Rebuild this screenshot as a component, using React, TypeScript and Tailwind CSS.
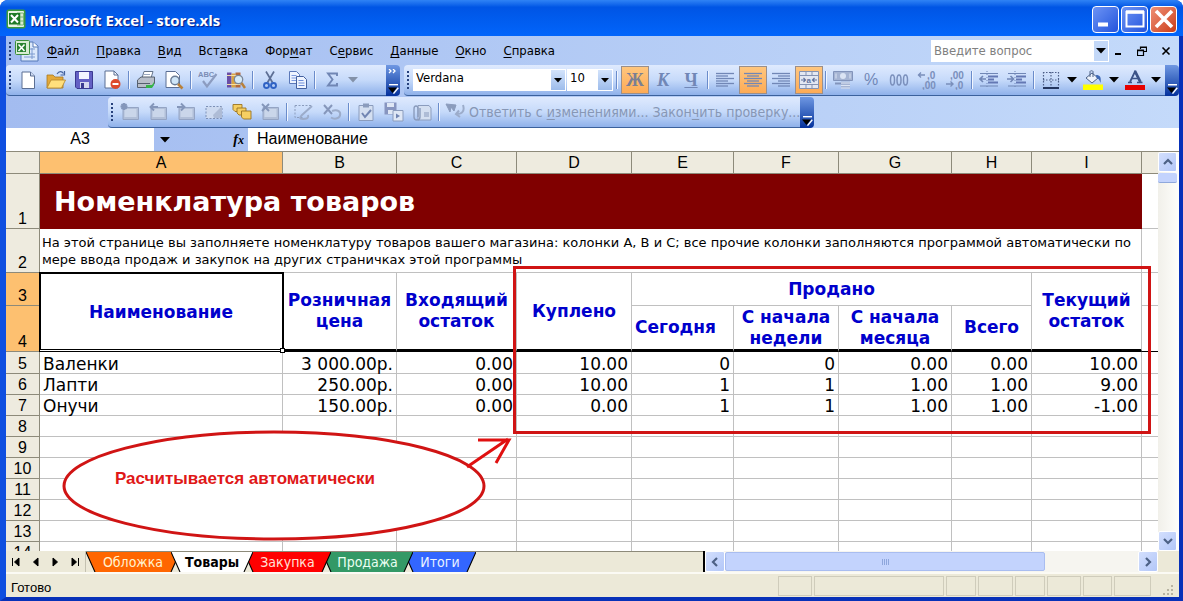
import type { ReactNode } from "react";

const ui = "font-['DejaVu_Sans_Condensed','DejaVu_Sans',sans-serif]";
const arial = "font-['Liberation_Sans',Arial,sans-serif]";
const verdana = "font-['DejaVu_Sans',Verdana,sans-serif]";

/* ---------- small building blocks ---------- */

function Icon({ children, className = "h-5 w-5" }: { children: ReactNode; className?: string }) {
  return (
    <svg viewBox="0 0 20 20" className={className} aria-hidden="true">
      {children}
    </svg>
  );
}

function Tool({ label, active, children }: { label: string; active?: boolean; children: ReactNode }) {
  return (
    <button
      type="button"
      aria-label={label}
      title={label}
      className={
        active
          ? "flex h-7 w-7 shrink-0 items-center justify-center border border-[#9a8f8c] bg-[#fdb462] bg-linear-to-b from-[#ffc67e] to-[#fdab55]"
          : "flex h-7 w-7 shrink-0 items-center justify-center"
      }
    >
      {children}
    </button>
  );
}

function Drop({ label, dim }: { label: string; dim?: boolean }) {
  return (
    <button type="button" aria-label={label} className="flex h-7 w-3.5 shrink-0 items-center justify-center">
      <svg viewBox="0 0 10 6" className="h-1.5 w-2.5" aria-hidden="true">
        <path d="M0 0h10L5 5.5z" fill={dim ? "#8391a8" : "#000"} />
      </svg>
    </button>
  );
}

function Sep() {
  return (
    <span className="flex w-1.5 shrink-0 justify-center">
      <span className="h-[18px] w-px bg-[#6a8ccb]" />
      <span className="h-[18px] w-px bg-[#f1f6ff]" />
    </span>
  );
}

function Grip() {
  return <span className="ml-[3px] mr-[3px] h-[18px] shrink-0 border-l-2 border-dotted border-[#27417c]" />;
}

function BarEnd({ more }: { more?: boolean }) {
  return (
    <button
      type="button"
      aria-label="Параметры панелей инструментов"
      className="flex h-full w-3.5 shrink-0 flex-col items-center justify-between self-stretch rounded-r-sm bg-linear-to-b from-[#6f97e2] to-[#04309c] pt-1 pb-0.5"
    >
      <svg viewBox="0 0 10 5" className="h-[5px] w-2.5" aria-hidden="true">
        {more && <path d="M1 0l2 2-2 2M5 0l2 2-2 2" fill="none" stroke="#fff" strokeWidth="1.3" />}
      </svg>
      <svg viewBox="0 0 12 10" className="h-2.5 w-3" aria-hidden="true">
        <path d="M2 .7h9" stroke="#fff" strokeWidth="1.4" />
        <path d="M1 3.5h9L5.500 9z" fill="#000" />
        <path d="M11.3 3.8L6.5 9.6" stroke="#fff" strokeWidth="1.4" />
      </svg>
    </button>
  );
}

const barLook = "flex items-center rounded-l-sm border-b border-[#3b619c] bg-linear-to-b from-[#dfeafe] via-[#c6dafa] to-[#8fb1ea]";

function ExcelMark({ className }: { className: string }) {
  return (
    <Icon className={className}>
      <rect x="0.500" y="0.500" width="19" height="19" rx="2" fill="#3c9a3e" />
      <rect x="2" y="2" width="16" height="16" rx="1" fill="#e9f3e4" />
      <path d="M11 4h6.500v12H11M14 4v12M11 8h6.500M11 12h6.500" fill="#d8ead2" stroke="#5ea65c" strokeWidth=".8" />
      <rect x="3" y="4" width="11" height="11.500" fill="#1f7a27" />
      <path d="M5 6l7 7.500M12 6l-7 7.500" stroke="#fff" strokeWidth="2" />
    </Icon>
  );
}

/* ---------- menu and toolbars ---------- */

const menus: [string, string, string][] = [
  ["", "Ф", "айл"],
  ["", "П", "равка"],
  ["", "В", "ид"],
  ["Вст", "а", "вка"],
  ["Фор", "м", "ат"],
  ["С", "е", "рвис"],
  ["", "Д", "анные"],
  ["", "О", "кно"],
  ["", "С", "правка"],
];

function TitleBar() {
  const box = "flex h-[27px] w-[27px] items-center justify-center rounded-[4px] border border-white";
  return (
    <header className="flex h-9 shrink-0 items-center bg-linear-to-b from-[#2f83f5] via-[#0055e5] via-20% to-[#0265fb] pr-1.5 pl-1.5">
      <ExcelMark className="mt-0.5 h-5 w-5" />
      <h1 className="ml-1 flex-1 truncate pt-1 font-['Open_Sans','Noto_Sans',sans-serif] text-[15px] font-bold text-white [text-shadow:1px_1px_1px_#0a1883]">
        Microsoft Excel - store.xls
      </h1>
      <div className="flex gap-0.5 pt-0.5">
        <button type="button" aria-label="Свернуть" className={`${box} bg-linear-to-br from-[#6d93f4] to-[#2352dc]`}>
          <Icon><path d="M2 15.5h10" stroke="#fff" strokeWidth="4" /></Icon>
        </button>
        <button type="button" aria-label="Развернуть" className={`${box} bg-linear-to-br from-[#6d93f4] to-[#2352dc]`}>
          <Icon><path d="M1.500 2v15.500h17V2M1 3.200h18" fill="none" stroke="#fff" strokeWidth="2" /><path d="M1 3h18" stroke="#fff" strokeWidth="3.500" /></Icon>
        </button>
        <button type="button" aria-label="Закрыть" className={`${box} bg-linear-to-br from-[#ee8f74] to-[#cb3a12]`}>
          <Icon><path d="M2 2l16 16M18 2L2 18" stroke="#fff" strokeWidth="3.600" /></Icon>
        </button>
      </div>
    </header>
  );
}

function MenuBar() {
  return (
    <div className="flex h-[29px] shrink-0 items-center pr-1">
      <Grip />
      <svg viewBox="0 0 24 22" className="ml-px h-[22px] w-6 shrink-0" aria-hidden="true">
        <path d="M6 2h12l5 4v15H6z" fill="#dce9fb" stroke="#5478b8" />
        <path d="M18 2v5h5" fill="#fff" stroke="#5478b8" />
        <path d="M9 17h11M9 14h11M14 9h6M17 8v11" stroke="#7c9bd0" />
        <rect x=".5" y=".5" width="14" height="14" rx="1" fill="#d8ecd2" stroke="#3c8f3c" />
        <rect x="2" y="3" width="9" height="9" fill="#2a8330" />
        <path d="M3.500 4.500l6 6.500M9.500 4.500l-6 6.500" stroke="#fff" strokeWidth="1.600" />
      </svg>
      <nav className={`ml-2 flex flex-1 gap-[17px] text-[13px] text-black ${ui}`}>
        {menus.map(([a, b, c]) => (
          <button type="button" key={a + b + c}>
            {a}
            <span className="underline underline-offset-2">{b}</span>
            {c}
          </button>
        ))}
      </nav>
      <div className="flex h-[22px] w-[178px] items-center bg-white pr-px">
        <input
          aria-label="Введите вопрос"
          placeholder="Введите вопрос"
          className={`min-w-0 flex-1 bg-transparent pl-[3px] text-[13px] outline-none placeholder:text-[#808080] ${ui}`}
        />
        <span className="flex h-5 items-center bg-[#c3d8f8]"><Drop label="Вопросы" /></span>
      </div>
      <div className="flex gap-1.5">
        <button type="button" aria-label="Свернуть книгу" className="flex w-[18px] justify-center">
          <svg viewBox="0 0 10 10" className="h-2.5 w-2.5"><path d="M2 8h6" stroke="#000" strokeWidth="2" /></svg>
        </button>
        <button type="button" aria-label="Восстановить книгу" className="flex w-[18px] justify-center">
          <svg viewBox="0 0 10 10" className="h-2.5 w-2.5"><path d="M3.500 3V1h6v4.500H7M3.500 1.500h6M.5 4h6v5.500h-6zM.5 4.600h6" fill="none" stroke="#000" strokeWidth="1.200" /></svg>
        </button>
        <button type="button" aria-label="Закрыть книгу" className="flex w-[18px] justify-center">
          <svg viewBox="0 0 10 10" className="h-2.5 w-2.5"><path d="M1.500 1.500l7 7M8.500 1.500l-7 7" stroke="#000" strokeWidth="1.600" /></svg>
        </button>
      </div>
    </div>
  );
}

function PageShape() {
  return (
    <>
      <path d="M4 2h8.500l4 4v12.500H4z" fill="#fff" stroke="#5b6f94" />
      <path d="M12.500 2v4h4" fill="#cfdcf2" stroke="#5b6f94" />
    </>
  );
}

function Combo({ label, value, className }: { label: string; value: string; className: string }) {
  return (
    <div className={`relative flex h-[22px] shrink-0 bg-white ${className}`}>
      <select aria-label={label} defaultValue={value} className={`block w-full appearance-none bg-transparent pb-1 pl-[3px] text-[13px] leading-4 outline-none ${ui}`}>
        <option>{value}</option>
      </select>
      <span className="pointer-events-none absolute top-px right-px flex h-5 w-3.5 items-center justify-center bg-linear-to-b from-[#d3e3fb] to-[#9dbceb]">
        <svg viewBox="0 0 8 5" className="h-[5px] w-2" aria-hidden="true"><path d="M0 0h8L4 4.500z" /></svg>
      </span>
    </div>
  );
}

function Lines({ rows }: { rows: [number, number][] }) {
  return (
    <Icon>
      {rows.map(([from, to], i) => (
        <path key={i} d={`M${from} ${3.5 + i * 2.5}H${to}`} stroke="#7187b6" strokeWidth="1.3" />
      ))}
    </Icon>
  );
}

function StandardBar() {
  return (
    <div className="flex h-[31px] shrink-0">
      <div className={`${barLook} w-[380px]`}>
        <Grip />
        <Tool label="Создать"><Icon><PageShape /></Icon></Tool>
        <Tool label="Открыть">
          <Icon>
            <path d="M1 5h6l2 2h8v11H1z" fill="#e3a93a" stroke="#a77a24" strokeWidth=".8" />
            <path d="M1 18l4-8h14.500l-4 8z" fill="#ffdf7c" stroke="#b28428" strokeWidth=".8" />
            <path d="M11 4c2-3 5-3 6.500-.5M18.500 1v4h-4" fill="none" stroke="#43639f" strokeWidth="1.200" />
          </Icon>
        </Tool>
        <Tool label="Сохранить">
          <Icon>
            <path d="M1.500 1.500h17v17H3l-1.500-1.500z" fill="#6360c4" stroke="#3b3a91" />
            <path d="M5 2h10v7H5z" fill="#f3f5ff" />
            <path d="M6 12h9v6H6z" fill="#d5d8ef" />
            <path d="M7 13h3v5H7z" fill="#3b3a91" />
          </Icon>
        </Tool>
        <Tool label="Разрешение">
          <Icon>
            <path d="M3 1h9l4 4v13H3z" fill="#fff" stroke="#5b6f94" />
            <path d="M12 1v4h4" fill="none" stroke="#5b6f94" />
            <circle cx="13.500" cy="14" r="5" fill="#dd4a2c" />
            <path d="M10.500 14h6" stroke="#fff" strokeWidth="2" />
          </Icon>
        </Tool>
        <Sep />
        <Tool label="Печать">
          <Icon>
            <path d="M6 8l2-6.500h9L15 8z" fill="#fff" stroke="#64748b" />
            <path d="M1.500 10L5 7h13.500v6.500L15 17.500H1.500z" fill="#b9bfca" stroke="#56606f" />
            <path d="M2 13.500h12" stroke="#56606f" />
            <path d="M10 15h6l2-3v3l-2 3h-6z" fill="#36b44a" />
            <path d="M8 4.500h6" stroke="#9aa8bf" />
          </Icon>
        </Tool>
        <Tool label="Предварительный просмотр">
          <Icon>
            <path d="M2 1.500h9.500l4 4v12H2z" fill="#fff" stroke="#5b6f94" />
            <circle cx="11" cy="10.500" r="4.200" fill="#cfe6f8" stroke="#6b7c95" strokeWidth="1.400" />
            <path d="M14 14l4.500 4.500" stroke="#b9813a" strokeWidth="2.600" />
          </Icon>
        </Tool>
        <Sep />
        <Tool label="Орфография">
          <Icon>
            <text x="0" y="7" fontSize="7.500" fontWeight="bold" fill="#7b8db5" fontFamily="Liberation Sans">ABC</text>
            <path d="M5 11l4 5.500L18.500 4" fill="none" stroke="#8c9cc0" strokeWidth="2.200" />
          </Icon>
        </Tool>
        <Tool label="Справочные материалы">
          <Icon>
            <path d="M1 2.500h4.500v15H1z" fill="#6a4fa6" /><path d="M5.500 3.500h4v14h-4z" fill="#d9a441" /><path d="M9.500 2.500h5v15h-5z" fill="#b56a3a" />
            <path d="M1 5.500h13M1 14.500h13" stroke="#f3dfa8" />
            <circle cx="12.500" cy="9.500" r="4.200" fill="#d6ebf8" stroke="#7b8798" strokeWidth="1.300" />
            <path d="M15.500 13l3.500 5" stroke="#b9813a" strokeWidth="2.500" />
          </Icon>
        </Tool>
        <Sep />
        <Tool label="Вырезать">
          <Icon>
            <path d="M6 1.500l6.500 11M14 1.500l-6.500 11" stroke="#5d6f94" strokeWidth="1.700" />
            <circle cx="6.500" cy="15.500" r="2.500" fill="none" stroke="#2f62c4" strokeWidth="1.900" />
            <circle cx="13.500" cy="15.500" r="2.500" fill="none" stroke="#2f62c4" strokeWidth="1.900" />
          </Icon>
        </Tool>
        <Tool label="Копировать">
          <Icon>
            <path d="M1.500 1.500h7l3 3v9h-10z" fill="#eef4ff" stroke="#5b78b8" />
            <path d="M3.500 5.500h5M3.500 8h5M3.500 10.500h5" stroke="#7d9be0" />
            <path d="M8.500 6.500h7l3 3v9h-10z" fill="#eef4ff" stroke="#44619f" />
            <path d="M10.500 10.500h5M10.500 13h6M10.500 15.500h6" stroke="#6c8dd8" />
          </Icon>
        </Tool>
        <Sep />
        <Tool label="Автосумма">
          <Icon><path d="M15 6V3.500H6l4.500 6L6 15.500h9V13" fill="none" stroke="#7086b4" strokeWidth="1.900" /></Icon>
        </Tool>
        <Drop label="Функции" dim />
      </div>
      <BarEnd more />
      <div className={`${barLook} ml-1 min-w-0 flex-1`}>
        <Grip />
        <Combo label="Шрифт" value="Verdana" className="ml-px w-[153px]" />
        <Combo label="Размер" value="10" className="mx-px w-[46px]" />
        <Sep />
        <span className="w-px" />
        <Tool label="Полужирный" active><span className="font-['Liberation_Serif',serif] text-lg leading-5 font-bold text-[#7b7f93]">Ж</span></Tool>
        <Tool label="Курсив"><span className="font-['Liberation_Serif',serif] text-lg leading-5 font-bold text-[#7187b6] italic">К</span></Tool>
        <Tool label="Подчеркнутый"><span className="font-['Liberation_Serif',serif] text-lg leading-5 font-bold text-[#7187b6] underline">Ч</span></Tool>
        <Sep />
        <Tool label="По левому краю"><Lines rows={[[1, 19], [1, 13], [1, 19], [1, 13], [1, 19], [1, 13]]} /></Tool>
        <Tool label="По центру" active><Lines rows={[[1, 19], [4, 16], [1, 19], [4, 16], [1, 19], [4, 16]]} /></Tool>
        <Tool label="По правому краю"><Lines rows={[[1, 19], [7, 19], [1, 19], [7, 19], [1, 19], [7, 19]]} /></Tool>
        <Tool label="Объединить и поместить в центре" active>
          <Icon>
            <path d="M.5 1.500h19v17H.5z" fill="#e3e8f3" stroke="#8593b3" />
            <path d="M.5 5.500h19M.5 14.500h19M7 1.500v4M13 1.500v4M7 14.500v4M13 14.500v4" stroke="#8593b3" />
            <path d="M2 10h4M4.500 8L6.500 10l-2 2M18 10h-4M15.500 8l-2 2 2 2" fill="none" stroke="#61739f" strokeWidth="1.200" />
            <text x="7.600" y="12.500" fontSize="8" fontWeight="bold" fill="#61739f" fontFamily="Liberation Sans">a</text>
          </Icon>
        </Tool>
        <Sep />
        <Tool label="Денежный формат">
          <Icon>
            <path d="M.5 1.500h19v9H.5z" fill="#a5b4d3" stroke="#8294bb" />
            <circle cx="10" cy="6" r="3" fill="#dbe4f4" /><path d="M3 3.500v5M17 3.500v5" stroke="#dbe4f4" />
            <path d="M8 11.500h9v7H8z" fill="#a5b4d3" /><path d="M8 13h9M8 15.500h9M8 18h9" stroke="#dbe4f4" /><path d="M2 13.500h6" stroke="#8294bb" strokeWidth="2" />
          </Icon>
        </Tool>
        <Tool label="Процентный формат"><span className={`text-base leading-5 text-[#7187b6] ${arial}`}>%</span></Tool>
        <Tool label="Формат с разделителями">
          <Icon>
            <g fill="none" stroke="#7a8fbb" strokeWidth="1.500"><ellipse cx="3.500" cy="10" rx="2" ry="5" /><ellipse cx="10" cy="10" rx="2" ry="5" /><ellipse cx="16.500" cy="10" rx="2" ry="5" /></g>
          </Icon>
        </Tool>
        <Tool label="Увеличить разрядность">
          <Icon>
            <g fontSize="10" fontWeight="bold" fill="#7a8fbb" fontFamily="Liberation Sans"><text x="10" y="8.500">,0</text><text x="5" y="18.500">,00</text></g>
            <path d="M1 5h7M4 2.500L1.500 5 4 7.500" fill="none" stroke="#7a8fbb" strokeWidth="1.400" />
          </Icon>
        </Tool>
        <Tool label="Уменьшить разрядность">
          <Icon>
            <g fontSize="10" fontWeight="bold" fill="#7a8fbb" fontFamily="Liberation Sans"><text x="5" y="8.500">,00</text><text x="10" y="18.500">,0</text></g>
            <path d="M1 14h7M5.500 11.500L8 14l-2.500 2.500" fill="none" stroke="#7a8fbb" strokeWidth="1.400" />
          </Icon>
        </Tool>
        <Sep />
        <Tool label="Уменьшить отступ">
          <Icon>
            <path d="M1 3.500h18M1 16h18" stroke="#7187b6" strokeWidth="1.200" />
            <path d="M9 6.500h10M9 9.500h6M9 12.500h10" stroke="#6478b4" strokeWidth="2" />
            <path d="M7 9H1M4 6L1 9l3 3" fill="none" stroke="#7187b6" strokeWidth="1.600" /><path d="M8 1v18" stroke="#7187b6" strokeDasharray="1 2" />
          </Icon>
        </Tool>
        <Tool label="Увеличить отступ">
          <Icon>
            <path d="M1 3.500h18M1 16h18" stroke="#7187b6" strokeWidth="1.200" />
            <path d="M9 6.500h10M9 9.500h6M9 12.500h10" stroke="#6478b4" strokeWidth="2" />
            <path d="M0 9h6M3.500 6l3 3-3 3" fill="none" stroke="#7187b6" strokeWidth="1.600" /><path d="M8 1v18" stroke="#7187b6" strokeDasharray="1 2" />
          </Icon>
        </Tool>
        <Sep />
        <Tool label="Границы">
          <Icon>
            <path d="M2.500 2v15M10 2v15M17.500 2v15M2 2.500h16M2 10h16" stroke="#4d5f88" strokeWidth="1.200" strokeDasharray="1.500 1.500" />
            <path d="M2 18h16" stroke="#24365f" strokeWidth="1.800" />
          </Icon>
        </Tool>
        <Drop label="Виды границ" />
        <Tool label="Цвет заливки">
          <Icon>
            <path d="M3 8l6-5 6 5-6 5z" fill="#eef3fb" stroke="#4c6287" /><path d="M7 7V1.500c0-1 3-1 3 0V7" fill="none" stroke="#4c6287" />
            <path d="M13 5c4 0 5.500 2 4.500 8-1-3-2-4.500-4-5z" fill="#3f69b5" />
            <path d="M0 14.500h20V20H0z" fill="#ff0" />
          </Icon>
        </Tool>
        <Drop label="Цвета заливки" />
        <Tool label="Цвет шрифта">
          <Icon>
            <path d="M5 12L10 1.500 15 12" fill="none" stroke="#3d5488" strokeWidth="1.800" />
            <path d="M10 1l5.500 11" stroke="#3d5488" strokeWidth="2.600" />
            <path d="M7 8.500h6M3 12.500h4M12 12.500h5.500" stroke="#3d5488" strokeWidth="1.400" />
            <path d="M0 15h20v5H0z" fill="#e60000" />
          </Icon>
        </Tool>
        <Drop label="Цвета шрифта" />
      </div>
      <BarEnd />
    </div>
  );
}

/* Dimmed comment-note icon with an optional mark drawn over it. */
function Note({ mark }: { mark?: string }) {
  return (
    <Icon>
      <path d="M3 5.500h15.500v12H3z" fill="#b1bfd8" stroke="#94a4c4" />
      <path d="M4.500 7h12v8h-12z" fill="#cad6ea" />
      {mark && <path d={mark} fill="none" stroke="#8496ba" strokeWidth="1.900" />}
    </Icon>
  );
}

function ReviewBar() {
  return (
    <div className="mt-px ml-[102px] flex h-[31px] shrink-0">
      <div className={barLook}>
        <Grip />
        <Tool label="Создать примечание"><Note mark="M4 1v7M.5 4.500h7M1.500 2l5 5M6.500 2l-5 5" /></Tool>
        <Tool label="Предыдущее примечание"><Note mark="M10 5H3M6 1.500L2.500 5 6 8.500" /></Tool>
        <Tool label="Следующее примечание"><Note mark="M1 5h7M5 1.500L8.500 5 5 8.500" /></Tool>
        <Tool label="Показать примечание">
          <Icon><path d="M2 4.500h16v12H2z" fill="#cddaf0" stroke="#7d90b6" strokeDasharray="2 1.500" /><path d="M9 13l9-9v12h-8z" fill="#aebcd6" /></Icon>
        </Tool>
        <Tool label="Показать все примечания">
          <Icon>
            <g fill="#f6cf62" stroke="#9a7422" strokeWidth=".9"><path d="M1 2.500h9v7H3l-2-2z" /><path d="M5 6h9v7H7l-2-2z" /><path d="M9.500 9h9.500v8h-7.500l-2-2z" /></g>
          </Icon>
        </Tool>
        <Tool label="Удалить примечание"><Note mark="M2 2l7 7M9 2L2 9" /></Tool>
        <Sep />
        <Tool label="Рукописные примечания">
          <Icon><path d="M1 3.500h17M1 3.500v12h8" fill="none" stroke="#8b9cbd" strokeDasharray="2 1.500" /><path d="M18 4L8 13c-2 2-3 4 1 4s6-1 5-4" fill="none" stroke="#9cacca" strokeWidth="2" /></Icon>
        </Tool>
        <Tool label="Удалить рукописные данные">
          <Icon><path d="M2 3l8 9M10 3l-8 9" stroke="#8697bb" strokeWidth="2" /><path d="M10 9c6-2 9 1 8 4.500s-6 4-9 2" fill="none" stroke="#9cacca" strokeWidth="2" /></Icon>
        </Tool>
        <Sep />
        <Tool label="Создать задачу">
          <Icon><path d="M3 3.500h14v15H3z" fill="#d4dff1" stroke="#8b9cbd" /><path d="M7 1.500h6v4H7z" fill="#8b9cbd" /><path d="M6 11l3 4 6-7" fill="none" stroke="#7185b2" strokeWidth="2" /></Icon>
        </Tool>
        <Tool label="Обновить файл">
          <Icon><path d="M.5 .5h12v12H.5z" fill="#8795c0" /><path d="M3 1h7v4H3zM4 8h5v4H4z" fill="#dfe7f5" /><path d="M9 8.500h10v10.500H9z" fill="#dfe7f5" stroke="#8b9cbd" /><path d="M12 11.500l4 2.500-4 2.500z" fill="#7185b2" /></Icon>
        </Tool>
        <Tool label="Отправить по почте">
          <Icon><path d="M6 3.500h11l2 2.500v12H6z" fill="#d4dff1" stroke="#8b9cbd" /><path d="M12 10h5v5h-5z" fill="#aebcd6" /><path d="M8 6v9c0 4-6 4-6 0V7c0-4 4-4 4 0v8" fill="none" stroke="#8b9cbd" strokeWidth="1.400" /></Icon>
        </Tool>
        <Sep />
        <button type="button" className={`flex items-center text-sm text-[#8797b5] ${ui}`}>
          <Icon className="mr-1 ml-[3px] h-5 w-5"><path d="M1 2l4 8 1-5 3 4 2-6z" fill="#8b9cbd" stroke="#8b9cbd" /><path d="M18 3c2 6-1 9-6 9M14 8.500L11 12l4 3" fill="none" stroke="#9cacca" strokeWidth="2" /></Icon>
          <span>Ответить с <span className="underline underline-offset-2">и</span>зменениями...</span>
        </button>
        <button type="button" className={`ml-1 text-sm text-[#8797b5] ${ui}`}>
          Закон<span className="underline underline-offset-2">ч</span>ить проверку...
        </button>
      </div>
      <BarEnd />
    </div>
  );
}

function FormulaBar() {
  return (
    <div className="flex h-[23px] shrink-0 items-stretch text-base">
      <input aria-label="Имя" defaultValue="A3" className={`w-[148px] bg-white pb-0.5 text-center outline-none ${arial}`} />
      <div className="flex w-[94px] items-center justify-between pr-1 pl-1">
        <Drop label="Имена" />
        <button type="button" aria-label="Вставка функции" className="font-['Liberation_Serif',serif] text-sm leading-5 font-bold italic">
          f<span className="text-xs">x</span>
        </button>
      </div>
      <input aria-label="Строка формул" defaultValue="Наименование" className={`min-w-0 flex-1 bg-white pb-0.5 pl-[9px] outline-none ${arial}`} />
    </div>
  );
}

/* ---------- worksheet ---------- */

const columns = [
  { name: "A", width: "w-[243px]" },
  { name: "B", width: "w-[114px]" },
  { name: "C", width: "w-[120px]" },
  { name: "D", width: "w-[115px]" },
  { name: "E", width: "w-[102px]" },
  { name: "F", width: "w-[105px]" },
  { name: "G", width: "w-[113px]" },
  { name: "H", width: "w-[80px]" },
  { name: "I", width: "w-[110px]" },
];

const goods = [
  ["Валенки", "3 000.00р.", "0.00", "10.00", "0", "0", "0.00", "0.00", "10.00"],
  ["Лапти", "250.00р.", "0.00", "10.00", "1", "1", "1.00", "1.00", "9.00"],
  ["Онучи", "150.00р.", "0.00", "0.00", "1", "1", "1.00", "1.00", "-1.00"],
];

const grid = "border-r border-b border-[#c0c0c0]";
const head = `${grid} p-0 text-center align-middle font-bold text-[#0000cc] text-[17px] leading-[21px]`;
const thick = "border-b-[3px] border-b-black";

function RowHead({ n, selected }: { n: number; selected?: boolean }) {
  return (
    <th
      scope="row"
      className={`border-r border-b border-[#8d8a7a] p-0 text-center align-bottom text-base leading-[18px] font-normal ${arial} ${selected ? "bg-[#fdc070]" : "bg-[#eeebdf]"}`}
    >
      {n}
    </th>
  );
}

function Sheet() {
  return (
    <div className="relative min-w-0 flex-1 overflow-hidden border-t border-[#8d8a7a] bg-white">
      <table className={`w-full table-fixed border-separate border-spacing-0 text-black ${verdana}`}>
        <colgroup>
          <col className="w-[34px]" />
          {columns.map((c) => <col key={c.name} className={c.width} />)}
          <col />
        </colgroup>
        <thead>
          <tr className={`h-[22px] text-base leading-5 ${arial}`}>
            <th className="border-r border-b border-[#8d8a7a] bg-[#eeebdf] p-0" />
            {columns.map((c) => (
              <th
                key={c.name}
                scope="col"
                className={`border-r border-b border-[#8d8a7a] p-0 font-normal ${c.name === "A" ? "bg-[#fdc070]" : "bg-[#eeebdf]"}`}
              >
                {c.name}
              </th>
            ))}
            <th className="border-b border-[#8d8a7a] bg-[#eeebdf] p-0" />
          </tr>
        </thead>
        <tbody>
          <tr className="h-[55px]">
            <RowHead n={1} />
            <td colSpan={9} className="bg-[#800000] p-0 pl-3.5 text-[27px] leading-8 font-bold text-white">Номенклатура товаров</td>
            <td className="border-b border-[#c0c0c0]" />
          </tr>
          <tr className="h-11">
            <RowHead n={2} />
            <td colSpan={9} className={`${grid} p-0 pl-0.5 align-middle text-[13px] leading-[17px] whitespace-nowrap`}>
              На этой странице вы заполняете номенклатуру товаров вашего магазина: колонки А, В и С; все прочие колонки заполняются программой автоматически по
              <br />
              мере ввода продаж и закупок на других страничках этой программы
            </td>
            <td className="border-b border-[#c0c0c0]" />
          </tr>
          <tr className="h-[33px]">
            <RowHead n={3} selected />
            <td rowSpan={2} className={`${head} relative`}>
              Наименование
              <span className="absolute -top-px -right-0.5 -bottom-px -left-px border-2 border-b-[3px] border-black [border-bottom-style:double]" />
              <span className="absolute -right-[3px] -bottom-0.5 h-[5px] w-[5px] border border-black bg-white" />
            </td>
            <td rowSpan={2} className={`${head} ${thick}`}>Розничная<br />цена</td>
            <td rowSpan={2} className={`${head} ${thick}`}>Входящий<br />остаток</td>
            <td rowSpan={2} className={`${head} ${thick}`}>Куплено</td>
            <td colSpan={4} className={head}>Продано</td>
            <td rowSpan={2} className={`${head} ${thick}`}>Текущий<br />остаток</td>
            <td className="border-b border-[#c0c0c0]" />
          </tr>
          <tr className="h-[46px]">
            <RowHead n={4} selected />
            <td className={`${head} ${thick} pr-3.5`}>Сегодня</td>
            <td className={`${head} ${thick}`}>С начала<br />недели</td>
            <td className={`${head} ${thick}`}>С начала<br />месяца</td>
            <td className={`${head} ${thick}`}>Всего</td>
            <td className="border-b border-black" />
          </tr>
          {goods.map((row, i) => (
            <tr key={row[0]} className={i === 0 ? "h-[22px]" : "h-[21px]"}>
              <RowHead n={i + 5} />
              {row.map((v, c) => (
                <td key={c} className={`${grid} p-0 pt-0.5 text-[17px] leading-[18px] whitespace-nowrap ${c === 0 ? "pl-[3px] text-left" : "pr-[3px] text-right"}`}>
                  {v}
                </td>
              ))}
              <td className="border-b border-[#c0c0c0]" />
            </tr>
          ))}
          {[8, 9, 10, 11, 12, 13, 14].map((n) => (
            <tr key={n} className="h-[21px]">
              <RowHead n={n} />
              {columns.map((c) => <td key={c.name} className={grid} />)}
              <td className="border-b border-[#c0c0c0]" />
            </tr>
          ))}
        </tbody>
      </table>

      {/* Annotations drawn over the grid */}
      <div className="pointer-events-none absolute top-[114px] left-[507px] h-[168px] w-[638px] border-[3px] border-[#d01414]" />
      <svg viewBox="0 0 460 120" className="pointer-events-none absolute top-[277px] left-[50px] h-[120px] w-[460px]" aria-hidden="true">
        <path d="M218 3C334 3 428 27 428 57S334 110 218 110C102 110 8 86 8 57S102 3 218 3z" fill="#fff" stroke="#d01414" strokeWidth="3" />
        <path d="M411 38L452 10M422 11h31L440 34" fill="none" stroke="#e01010" strokeWidth="3" />
      </svg>
      <p className={`absolute top-[317px] left-[109px] text-[17px] leading-5 font-bold text-[#e01818] ${arial}`}>Расчитывается автоматически</p>
    </div>
  );
}

const scrollBtn = "flex shrink-0 items-center justify-center rounded-xs border border-white bg-linear-to-br from-[#d3dffd] to-[#b3c7f8]";

function Chevron({ d }: { d: string }) {
  return (
    <svg viewBox="0 0 10 10" className="h-2.5 w-2.5" aria-hidden="true">
      <path d={d} fill="none" stroke="#4d6185" strokeWidth="2.200" />
    </svg>
  );
}

function VerticalScroll() {
  return (
    <div className="flex w-[21px] shrink-0 flex-col border-t border-[#8d8a7a] bg-linear-to-r from-[#f1f0ea] to-[#fefefb] pr-0.5">
      <button type="button" aria-label="Вверх" className={`${scrollBtn} h-5`}><Chevron d="M1 7l4-4 4 4" /></button>
      <span className="mt-px h-2.5 rounded-xs border-b border-[#8fa8dc] bg-[#c3d3fd]" />
      <span className="flex-1" />
      <button type="button" aria-label="Вниз" className={`${scrollBtn} h-5`}><Chevron d="M1 3l4 4 4-4" /></button>
    </div>
  );
}

/* ---------- sheet tabs and status ---------- */

const tabs = [
  { name: "Обложка", w: 94, fill: "#ff6600", look: "text-[#fff3d0]", z: "z-10" },
  { name: "Товары", w: 82, fill: "#ffffff", look: "font-bold text-black", z: "z-20" },
  { name: "Закупка", w: 87, fill: "#ff0000", look: "text-[#ffe2d8]", z: "z-10" },
  { name: "Продажа", w: 91, fill: "#339966", look: "text-[#eafff2]", z: "z-[5]" },
  { name: "Итоги", w: 72, fill: "#3366ff", look: "text-[#eaf2ff]", z: "z-0" },
];

function TabBar() {
  const nav = [
    ["Первый лист", "M1.500 1v8M8 1v8L3.500 5z"],
    ["Предыдущий лист", "M7 1v8L2.500 5z"],
    ["Следующий лист", "M3 1v8L7.500 5z"],
    ["Последний лист", "M8.500 1v8M2 1v8l4.500-4z"],
  ];
  return (
    <div className="flex h-[23px] shrink-0 border-b-2 border-[#fbfaf4] bg-[#ece9d8]">
      <div className="flex w-20 shrink-0 border-r border-[#c4c1b0]">
        {nav.map(([label, d]) => (
          <button type="button" key={label} aria-label={label} className="flex w-5 items-center justify-center">
            <svg viewBox="0 0 10 10" className="h-2.5 w-2.5" aria-hidden="true"><path d={d} stroke="#000" strokeWidth="1" /></svg>
          </button>
        ))}
      </div>
      <div role="tablist" aria-label="Листы" className="isolate flex min-w-0 flex-1 border-t border-[#8d8a7a] pl-[9px]">
        {tabs.map((t) => (
          <button
            type="button"
            role="tab"
            aria-selected={t.name === "Товары"}
            key={t.name}
            style={{ width: t.w }}
            className={`relative -ml-[9px] h-5 shrink-0 text-sm leading-5 ${ui} ${t.look} ${t.z}`}
          >
            <svg viewBox={`0 0 ${t.w} 20`} className="absolute inset-0 h-full w-full" aria-hidden="true">
              <path d={`M0 0L9 20H${t.w - 9}L${t.w} 0`} fill={t.fill} />
              <path d={`M0 0L9 20M${t.w - 9} 20L${t.w} 0`} stroke="#000" strokeWidth="1.100" />
            </svg>
            <span className="relative">{t.name}</span>
          </button>
        ))}
      </div>
      <div className="flex w-[455px] shrink-0 border-l-2 border-black bg-[#f6f5f0]">
        <button type="button" aria-label="Влево" className={`${scrollBtn} w-5`}><Chevron d="M7 1L3 5l4 4" /></button>
        <span className="my-px flex w-[320px] items-center justify-center gap-px rounded-xs border border-[#a9bdf0] bg-[#c3d3fd]">
          {[0, 1, 2, 3].map((i) => <span key={i} className="h-1.5 w-px border-r border-[#8ea6dc] bg-white" />)}
        </span>
        <span className="flex-1" />
        <button type="button" aria-label="Вправо" className={`${scrollBtn} w-5`}><Chevron d="M3 1l4 4-4 4" /></button>
      </div>
      <span className="w-[21px] shrink-0" />
    </div>
  );
}

function StatusBar() {
  const cells = ["w-[34px]", "w-[130px]", "w-[30px]", "w-[35px]", "w-[30px]", "w-[34px]", "w-[29px]", "w-[37px]"];
  return (
    <footer className="flex h-[23px] shrink-0 items-center bg-[#ece9d8] pr-1">
      <span className={`flex-1 pt-1 pl-[5px] text-[13px] leading-4 ${arial}`}>Готово</span>
      <div className="flex gap-0.5">
        {cells.map((w, i) => <span key={i} className={`h-5 border border-[#cfccbb] ${w}`} />)}
      </div>
      <svg viewBox="0 0 12 12" className="mt-2 ml-3 h-3 w-3" aria-hidden="true">
        <path d="M8 1h2v2H8zM4 5h2v2H4zM8 5h2v2H8zM0 9h2v2H0zM4 9h2v2H4zM8 9h2v2H8z" fill="#b8b4a2" />
      </svg>
    </footer>
  );
}

export default function App() {
  return (
    <div className="flex h-screen flex-col overflow-hidden rounded-t-lg bg-[#0831d9]">
      <TitleBar />
      <div className="flex min-h-0 flex-1 flex-col border-r-4 border-b-4 border-l-[6px] border-r-[#0831b8] border-b-[#0831b8] border-l-[#0f4fe0]">
        <div className="flex shrink-0 flex-col bg-linear-to-r from-[#a3bcf0] to-[#c4dafa]">
          <MenuBar />
          <StandardBar />
          <ReviewBar />
          <FormulaBar />
        </div>
        <main className="flex min-h-0 flex-1">
          <Sheet />
          <VerticalScroll />
        </main>
        <TabBar />
        <StatusBar />
      </div>
    </div>
  );
}
